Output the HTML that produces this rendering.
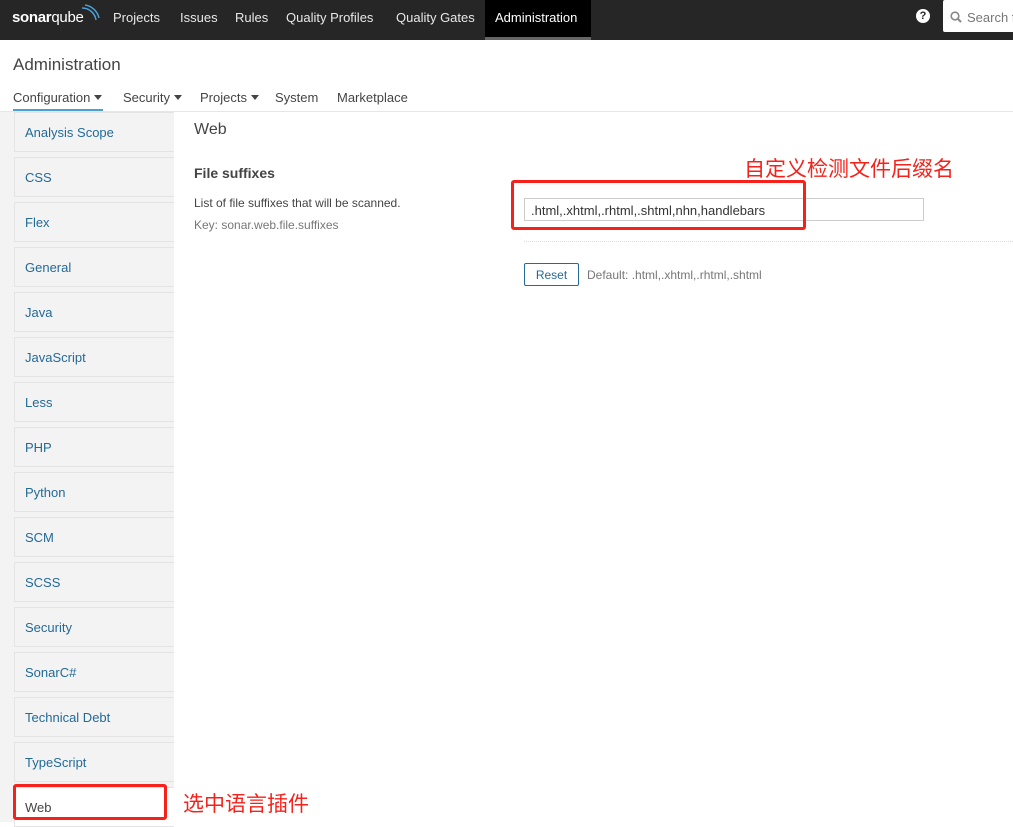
<!DOCTYPE html>
<html><head><meta charset="utf-8"><style>
*{box-sizing:border-box;margin:0;padding:0}
body{width:1013px;height:822px;overflow:hidden;background:#fff;font-family:"Liberation Sans","Noto Sans CJK SC",sans-serif;font-size:13px;color:#444;position:relative}
.top{position:absolute;left:0;top:0;width:1013px;height:40px;background:#262626}
.top .logo{position:absolute;left:12px;top:9px;color:#fff;font-size:15px;letter-spacing:-0.3px}
.top .n{position:absolute;top:10px;color:#e8e8e8;font-size:13px}
.top .act{position:absolute;left:485px;top:0;width:106px;height:40px;background:#000;border-bottom:3px solid #666}
.srch{position:absolute;left:943px;top:0;width:80px;height:32px;background:#fff;border-radius:2px}
.srch span{position:absolute;left:24px;top:10px;color:#777;font-size:13px}
.a{position:absolute;white-space:nowrap}
.side{position:absolute;left:0;top:112px;width:174px;height:710px;background:#f3f3f3}
.it{position:absolute;left:14px;width:160px;height:40px;background:#f3f3f3;border:1px solid #e4e4e4;border-right:none;color:#236a97;padding:12px 10px;font-size:13px}
.red{position:absolute;border:3px solid #f5211a;border-radius:3px}
.tri{display:inline-block;width:0;height:0;border-left:4px solid transparent;border-right:4px solid transparent;border-top:5px solid #444;margin-left:4px;vertical-align:2px}
</style></head><body>
<div class="top">
<div class="logo"><b>sonar</b>qube<svg style="position:absolute;left:68px;top:-5px" width="20" height="18"><path d="M2 4 A14 14 0 0 1 16 16 M5 1 A17 17 0 0 1 19 14" stroke="#4b9fd5" stroke-width="1.5" fill="none"/></svg></div>
<div class="act"></div>
<span class="n" style="left:113px">Projects</span>
<span class="n" style="left:180px">Issues</span>
<span class="n" style="left:235px">Rules</span>
<span class="n" style="left:286px">Quality Profiles</span>
<span class="n" style="left:396px">Quality Gates</span>
<span class="n" style="left:495px;color:#fff">Administration</span>
<div style="position:absolute;left:916px;top:9px;width:14px;height:14px;border-radius:50%;background:#fff;color:#262626;font-size:11px;font-weight:bold;text-align:center;line-height:14px">?</div>
<div class="srch"><svg style="position:absolute;left:7px;top:11px" width="12" height="12"><circle cx="5" cy="5" r="3.8" stroke="#888" stroke-width="1.6" fill="none"/><path d="M8 8 L11 11" stroke="#888" stroke-width="2"/></svg><span>Search f</span></div>
</div>
<div class="a" style="left:13px;top:55px;font-size:17px;color:#444">Administration</div>
<div class="a" style="left:13px;top:90px;color:#444">Configuration<span class="tri"></span></div>
<div class="a" style="left:13px;top:109px;width:90px;height:3px;background:#4b9fd5"></div>
<div class="a" style="left:123px;top:90px">Security<span class="tri"></span></div>
<div class="a" style="left:200px;top:90px">Projects<span class="tri"></span></div>
<div class="a" style="left:275px;top:90px">System</div>
<div class="a" style="left:337px;top:90px">Marketplace</div>
<div class="a" style="left:0;top:111px;width:1013px;height:1px;background:#e6e6e6"></div>
<div class="side"></div>
<div class="it" style="top:112px">Analysis Scope</div>
<div class="it" style="top:157px">CSS</div>
<div class="it" style="top:202px">Flex</div>
<div class="it" style="top:247px">General</div>
<div class="it" style="top:292px">Java</div>
<div class="it" style="top:337px">JavaScript</div>
<div class="it" style="top:382px">Less</div>
<div class="it" style="top:427px">PHP</div>
<div class="it" style="top:472px">Python</div>
<div class="it" style="top:517px">SCM</div>
<div class="it" style="top:562px">SCSS</div>
<div class="it" style="top:607px">Security</div>
<div class="it" style="top:652px">SonarC#</div>
<div class="it" style="top:697px">Technical Debt</div>
<div class="it" style="top:742px">TypeScript</div>
<div class="it" style="top:787px;background:#fff;color:#444;height:40px">Web</div>
<div class="red" style="left:13px;top:784px;width:154px;height:36px"></div>
<div class="a" style="left:183px;top:788px;font-size:21px;color:#f5211a">选中语言插件</div>
<div class="a" style="left:194px;top:121px;font-size:16px">Web</div>
<div class="a" style="left:194px;top:165px;font-size:14px;font-weight:bold;color:#444">File suffixes</div>
<div class="a" style="left:194px;top:196px;font-size:12px">List of file suffixes that will be scanned.</div>
<div class="a" style="left:194px;top:218px;font-size:12px;color:#777">Key: sonar.web.file.suffixes</div>
<div class="a" style="left:744px;top:153px;font-size:21px;color:#f5211a">自定义检测文件后缀名</div>
<div class="a" style="left:524px;top:198px;width:400px;height:23px;border:1px solid #ccc;padding:4px 6px;font-size:13px;color:#333">.html,.xhtml,.rhtml,.shtml,nhn,handlebars</div>
<div class="red" style="left:511px;top:180px;width:295px;height:50px"></div>
<div class="a" style="left:524px;top:241px;width:489px;border-top:1px dotted #ddd"></div>
<div class="a" style="left:524px;top:263px;width:55px;height:23px;border:1px solid #236a97;border-radius:2px;text-align:center;line-height:22px;color:#236a97;font-size:12px">Reset</div>
<div class="a" style="left:587px;top:268px;font-size:12px;color:#777">Default: .html,.xhtml,.rhtml,.shtml</div>
</body></html>
